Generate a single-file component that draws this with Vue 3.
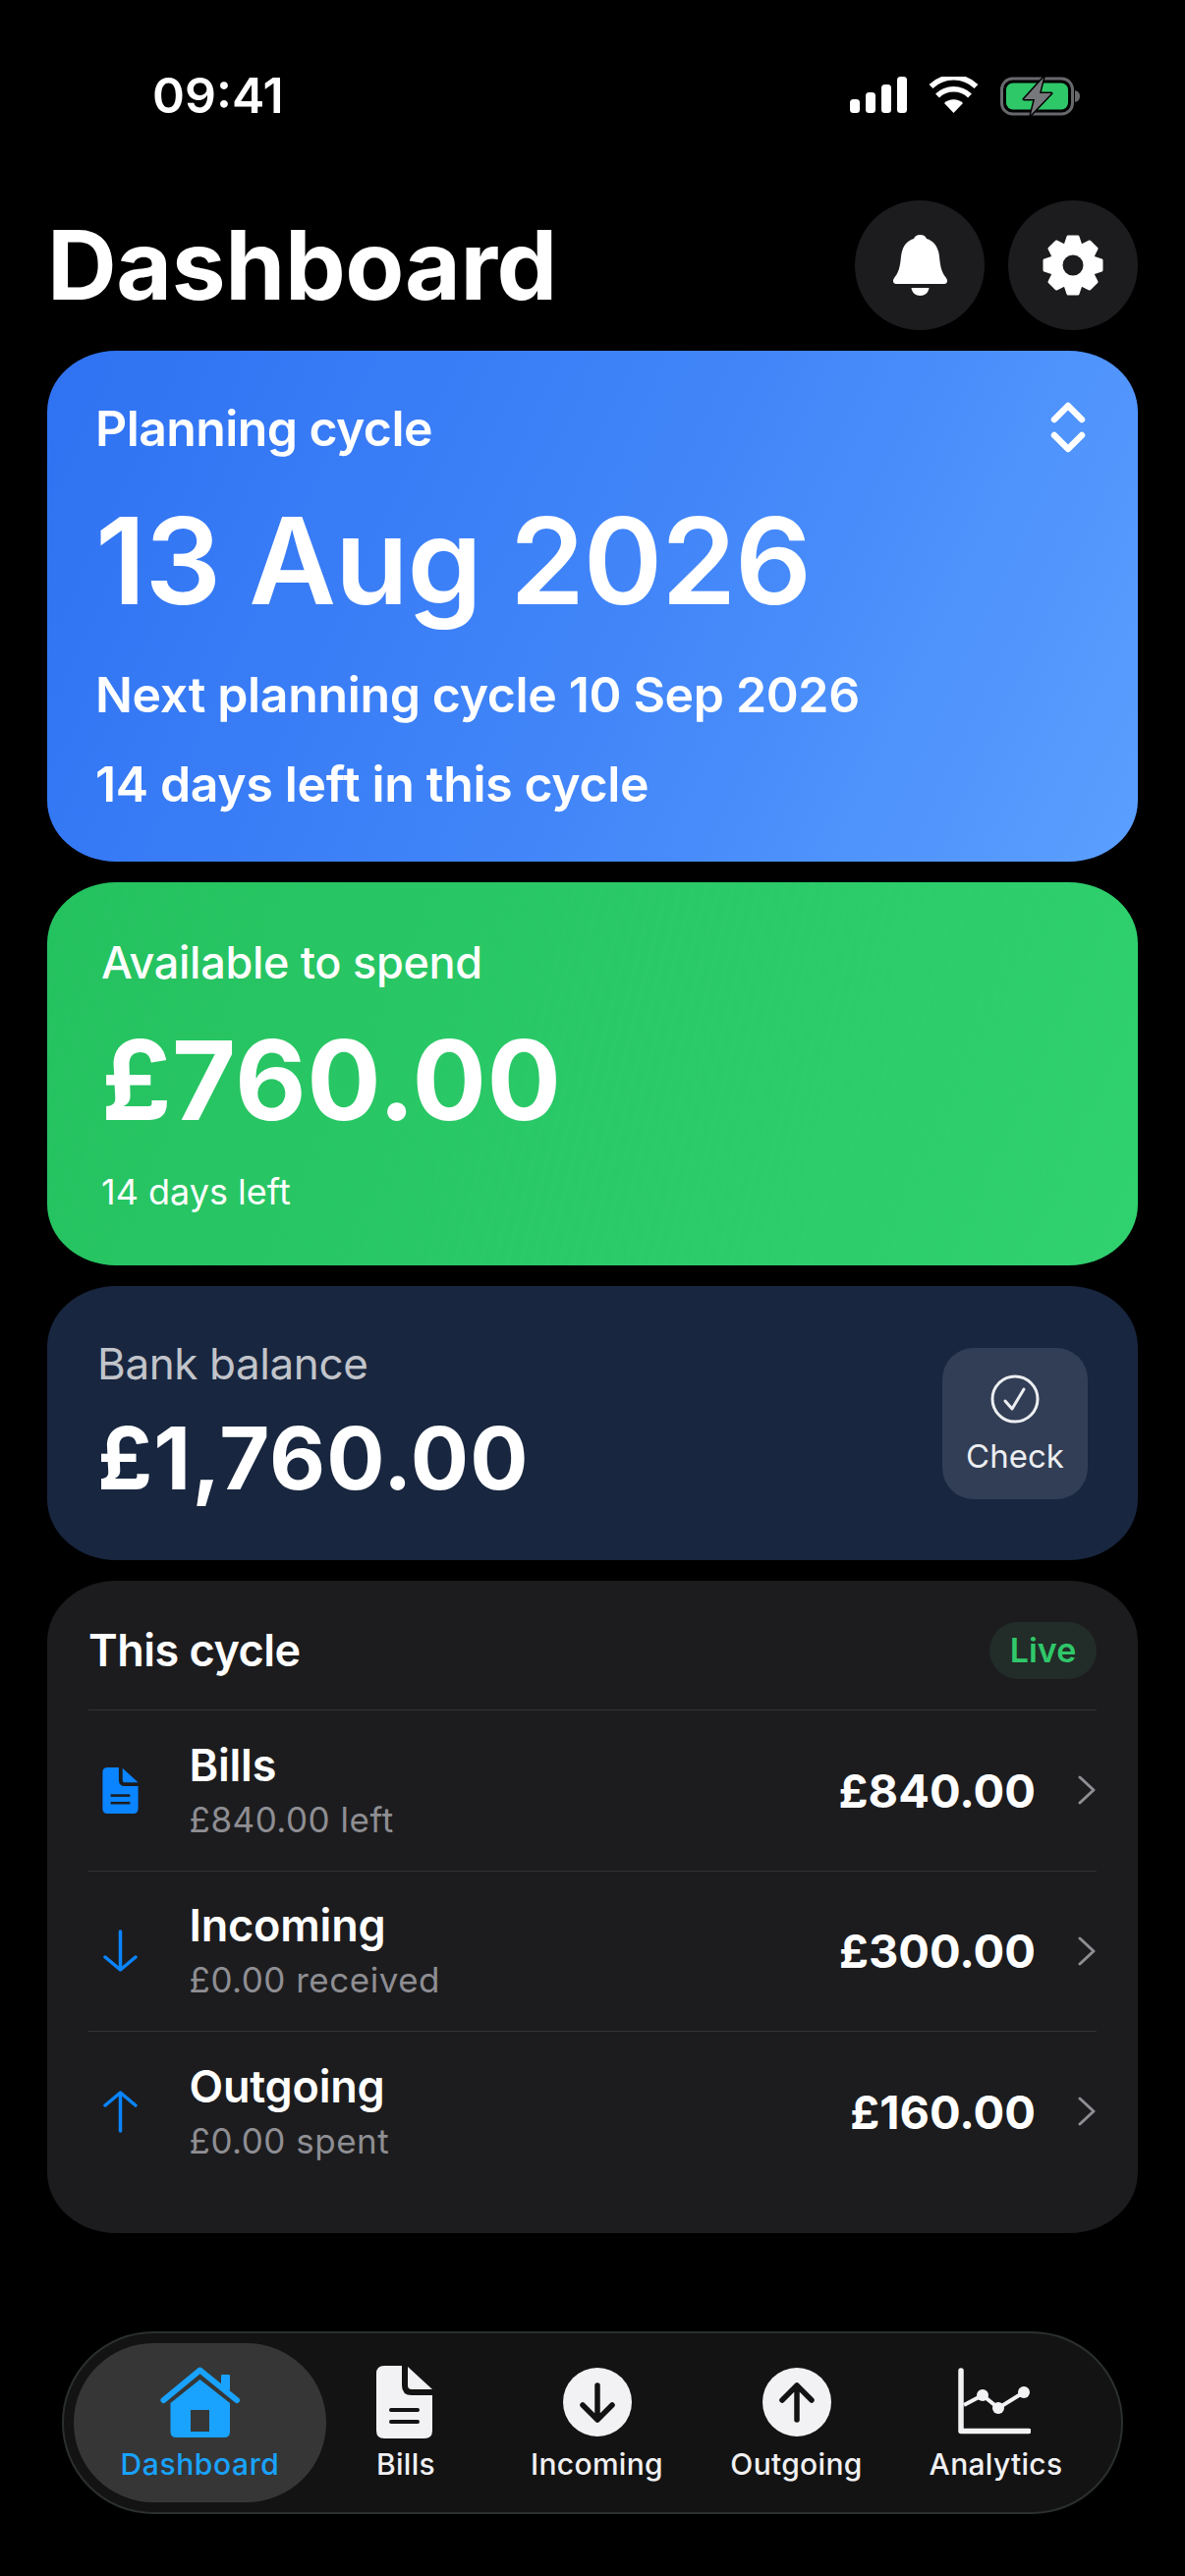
<template>
  <div class="page">
    <div class="status">
      <span class="time">09:41</span>
      <div class="status-icons">
        <svg class="signal" width="58" height="37" viewBox="0 0 58 37">
          <rect x="0" y="23" width="10" height="14" rx="3.5" />
          <rect x="16" y="16" width="10" height="21" rx="3.5" />
          <rect x="32" y="8" width="10" height="29" rx="3.5" />
          <rect x="48" y="0" width="10" height="37" rx="3.5" />
        </svg>
        <svg class="wifi" width="51" height="37" viewBox="0 0 51 37">
          <path d="M25.5 37 L16 27 A14 14 0 0 1 35 27 Z" fill="#fff" />
          <path d="M9 19.5 A23.5 23.5 0 0 1 42 19.5" fill="none" stroke="#fff" stroke-width="5.5" />
          <path d="M2.5 10 A33 33 0 0 1 48.5 10" fill="none" stroke="#fff" stroke-width="5.5" />
        </svg>
        <svg class="battery" width="82" height="40" viewBox="0 0 82 40">
          <rect x="1.5" y="2" width="72" height="36" rx="11" fill="none" stroke="#68696d" stroke-width="3" />
          <rect x="6" y="6.5" width="63" height="27" rx="7" fill="#2fc868" />
          <path d="M76 14 Q81 15 81 20 Q81 25 76 26 Z" fill="#68696d" />
          <path d="M44 1 L24 23 H35 L31 39 L52 17 H40 Z" fill="#77787c" stroke="#000" stroke-width="3" stroke-linejoin="round" paint-order="stroke" />
        </svg>
      </div>
    </div>

    <header class="top">
      <h1>Dashboard</h1>
      <div class="top-actions">
        <button class="round-btn">
          <svg width="55" height="62" viewBox="0 0 55 62" fill="#fff">
            <path d="M27.5 0 C31 0 33 1.5 34 4 C42 6.5 46 13 47 22 C48 34 50 39 54 44 C56 47 55 50 52 50 L3 50 C0 50 -1 47 1 44 C5 39 7 34 8 22 C9 13 13 6.5 21 4 C22 1.5 24 0 27.5 0 Z" />
            <path d="M18.5 54 L36.5 54 C36 59 32 62 27.5 62 C23 62 19 59 18.5 54 Z" />
          </svg>
        </button>
        <button class="round-btn">
          <svg width="62" height="62" viewBox="-31 -31 62 62">
            <circle r="16.5" fill="none" stroke="#fff" stroke-width="12" />
            <path
              v-for="deg in gearTeeth"
              :key="deg"
              d="M-8 -20 L-5 -29 H5 L8 -20 Z"
              fill="#fff"
              stroke="#fff"
              stroke-width="3"
              stroke-linejoin="round"
              :transform="`rotate(${deg})`"
            />
          </svg>
        </button>
      </div>
    </header>

    <main class="cards">
      <section class="card plan">
        <div class="plan-head">
          <span>Planning cycle</span>
          <svg width="36" height="52" viewBox="0 0 36 52" fill="none" stroke="#fff" stroke-width="6.5" stroke-linecap="round" stroke-linejoin="round">
            <path d="M4 18 L18 4 L32 18" />
            <path d="M4 34 L18 48 L32 34" />
          </svg>
        </div>
        <div class="plan-date">13 Aug 2026</div>
        <div class="plan-next">Next planning cycle 10 Sep 2026</div>
        <div class="plan-left">14 days left in this cycle</div>
      </section>

      <section class="card spend">
        <div class="spend-label">Available to spend</div>
        <div class="spend-amount">£760.00</div>
        <div class="spend-days">14 days left</div>
      </section>

      <section class="card bank">
        <div>
          <div class="bank-label">Bank balance</div>
          <div class="bank-amount">£1,760.00</div>
        </div>
        <button class="check-btn">
          <svg width="50" height="50" viewBox="0 0 50 50" fill="none" stroke="#eceef1" stroke-width="3" stroke-linecap="round" stroke-linejoin="round">
            <circle cx="25" cy="25" r="23" />
            <path d="M15 27 L22 35 L34 15" />
          </svg>
          <span>Check</span>
        </button>
      </section>

      <section class="card cycle">
        <div class="cycle-head">
          <span class="cycle-title">This cycle</span>
          <span class="live">Live</span>
        </div>
        <div v-for="row in rows" :key="row.title" class="row">
          <div class="row-icon">
            <svg v-if="row.icon === 'bill'" width="37" height="47" viewBox="0 0 57 74">
              <path d="M8 0 H26 V20 Q26 30 36 30 H57 V66 Q57 74 49 74 H8 Q0 74 0 66 V8 Q0 0 8 0 Z" fill="#0a84ff" />
              <path d="M32 1 L57 24 H36 Q32 24 32 20 Z" fill="#0a84ff" />
              <rect x="13" y="43" width="31" height="4" fill="#1c1c1e" />
              <rect x="13" y="55" width="31" height="4" fill="#1c1c1e" />
            </svg>
            <svg v-else width="35" height="44" viewBox="0 0 35 44" fill="none" stroke="#0a84ff" stroke-width="3.5" stroke-linecap="round" stroke-linejoin="round">
              <path v-if="row.icon === 'down'" d="M17.5 2 V41 M2 28 L17.5 41 L33 28" />
              <path v-else d="M17.5 42 V3 M2 16 L17.5 3 L33 16" />
            </svg>
          </div>
          <div class="row-text">
            <div class="row-title">{{ row.title }}</div>
            <div class="row-sub">{{ row.sub }}</div>
          </div>
          <div class="row-amount">{{ row.amount }}</div>
          <svg class="row-chev" width="18" height="30" viewBox="0 0 18 30" fill="none" stroke="#8e8e93" stroke-width="3" stroke-linecap="round" stroke-linejoin="round">
            <path d="M2 2 L16 15 L2 28" />
          </svg>
        </div>
      </section>
    </main>

    <nav class="tabbar">
      <div class="tab active">
        <svg width="82" height="72" viewBox="0 0 82 72">
          <rect x="62" y="8" width="9" height="16" rx="1" fill="#19a3ff" />
          <path d="M3.5 34 L40.5 3.5 L78 34" fill="none" stroke="#19a3ff" stroke-width="6" stroke-linecap="round" stroke-linejoin="round" />
          <path d="M40.5 13 L71 37 V66 Q71 72 65 72 H16.5 Q10.5 72 10.5 66 V37 Z" fill="#19a3ff" />
          <rect x="31" y="44" width="19" height="22" fill="#363636" />
        </svg>
        <span>Dashboard</span>
      </div>
      <div class="tab tab-bills">
        <svg width="57" height="74" viewBox="0 0 57 74">
          <path d="M8 0 H26 V20 Q26 30 36 30 H57 V66 Q57 74 49 74 H8 Q0 74 0 66 V8 Q0 0 8 0 Z" fill="#f2f2f4" />
          <path d="M32 1 L57 24 H36 Q32 24 32 20 Z" fill="#f2f2f4" />
          <rect x="13" y="43" width="31" height="4" rx="2" fill="#131313" />
          <rect x="13" y="55" width="31" height="4" rx="2" fill="#131313" />
        </svg>
        <span>Bills</span>
      </div>
      <div class="tab">
        <svg width="70" height="70" viewBox="0 0 70 70">
          <circle cx="35" cy="35" r="35" fill="#f2f2f4" />
          <path d="M35 18 V53 M20 38 L35 53 L50 38" fill="none" stroke="#131313" stroke-width="5.5" stroke-linecap="round" stroke-linejoin="round" />
        </svg>
        <span>Incoming</span>
      </div>
      <div class="tab">
        <svg width="70" height="70" viewBox="0 0 70 70">
          <circle cx="35" cy="35" r="35" fill="#f2f2f4" />
          <path d="M35 53 V18 M20 33 L35 18 L50 33" fill="none" stroke="#131313" stroke-width="5.5" stroke-linecap="round" stroke-linejoin="round" />
        </svg>
        <span>Outgoing</span>
      </div>
      <div class="tab">
        <svg class="chart" width="74" height="70" viewBox="0 -3 74 70">
          <path d="M3 0 V61.5 H72" fill="none" stroke="#f2f2f4" stroke-width="5.5" stroke-linecap="round" stroke-linejoin="round" />
          <path d="M6 35 L25 25 L41 38 L67 22" fill="none" stroke="#f2f2f4" stroke-width="4" stroke-linejoin="round" />
          <circle cx="25" cy="25" r="6" fill="#f2f2f4" />
          <circle cx="41" cy="38" r="6" fill="#f2f2f4" />
          <circle cx="67" cy="22" r="6" fill="#f2f2f4" />
        </svg>
        <span>Analytics</span>
      </div>
    </nav>
  </div>
</template>

<script setup>
const gearTeeth = [0, 45, 90, 135, 180, 225, 270, 315];

const rows = [
  { icon: "bill", title: "Bills", sub: "£840.00 left", amount: "£840.00" },
  { icon: "down", title: "Incoming", sub: "£0.00 received", amount: "£300.00" },
  { icon: "up", title: "Outgoing", sub: "£0.00 spent", amount: "£160.00" },
];
</script>

<style>
html,
body {
  background: #000;
}
</style>

<style scoped>
.page {
  width: 1206px;
  height: 2622px;
  background: #000;
  color: #fff;
  font-family: Inter, "Liberation Sans", sans-serif;
  display: flex;
  flex-direction: column;
  overflow: hidden;
}

.status {
  height: 204px;
  padding: 78px 106px 0 155px;
  box-sizing: border-box;
  display: flex;
  justify-content: space-between;
  align-items: flex-start;
}
.time {
  font-size: 50px;
  line-height: 39px;
  font-weight: 600;
}
.status-icons {
  display: flex;
  align-items: flex-start;
  gap: 22px;
}
.signal {
  fill: #fff;
}

.top {
  height: 132px;
  margin-bottom: 21px;
  padding: 0 48px;
  display: flex;
  justify-content: space-between;
  align-items: center;
}
h1 {
  margin: 0;
  font-size: 98px;
  line-height: 132px;
  font-weight: 700;
  letter-spacing: -0.4px;
}
.top-actions {
  display: flex;
  gap: 24px;
}
.round-btn {
  width: 132px;
  height: 132px;
  border: 0;
  padding: 0;
  border-radius: 50%;
  background: #1c1c1e;
  display: flex;
  align-items: center;
  justify-content: center;
}

.cards {
  padding: 0 48px;
  display: flex;
  flex-direction: column;
  gap: 21px;
}
.card {
  border-radius: 70px / 62px;
  box-sizing: border-box;
}

.plan {
  height: 520px;
  padding: 49px 49px 0;
  background: linear-gradient(115deg, #2f72f2 0%, #4286f9 55%, #5b9fff 100%);
}
.plan-head {
  display: flex;
  justify-content: space-between;
  align-items: center;
  height: 60px;
  font-size: 50px;
  font-weight: 600;
  letter-spacing: -0.6px;
}
.plan-head svg {
  margin-right: 4px;
  margin-top: -2px;
}
.plan-date {
  margin-top: 40px;
  font-size: 122px;
  line-height: 130px;
  font-weight: 600;
  letter-spacing: -1.2px;
}
.plan-next,
.plan-left {
  font-size: 50px;
  line-height: 60px;
  font-weight: 600;
  letter-spacing: -0.35px;
}
.plan-next {
  margin-top: 41px;
}
.plan-left {
  margin-top: 31px;
}

.spend {
  height: 390px;
  padding: 54px 55px 0;
  background:
    repeating-linear-gradient(104deg, rgba(255, 255, 255, 0.006) 0 5px, transparent 5px 13px),
    linear-gradient(115deg, #24c15f 0%, #30d16f 100%);
}
.spend-label {
  font-size: 45px;
  line-height: 56px;
  font-weight: 500;
  letter-spacing: -0.3px;
}
.spend-amount {
  margin-top: 31px;
  font-size: 112px;
  line-height: 120px;
  font-weight: 700;
  letter-spacing: 0.5px;
}
.spend-days {
  margin-top: 32px;
  font-size: 36px;
  line-height: 44px;
  font-weight: 400;
}

.bank {
  height: 279px;
  padding: 0 51px;
  background: #18263f;
  display: flex;
  justify-content: space-between;
  align-items: center;
}
.bank-label {
  font-size: 44px;
  line-height: 50px;
  color: #c1c4ca;
  letter-spacing: -0.4px;
}
.bank-amount {
  margin-top: 21px;
  font-size: 88px;
  line-height: 100px;
  font-weight: 700;
  letter-spacing: 1px;
}
.check-btn {
  width: 148px;
  height: 154px;
  border: 0;
  padding: 27px 0 0;
  box-sizing: border-box;
  border-radius: 32px;
  background: #323e55;
  color: #eceef1;
  font: inherit;
  font-size: 33px;
  display: flex;
  flex-direction: column;
  align-items: center;
  gap: 13px;
}

.cycle {
  height: 664px;
  padding: 42px 42px 0;
  background: #1c1c1e;
}
.cycle-head {
  height: 89px;
  display: flex;
  justify-content: space-between;
  align-items: flex-start;
}
.cycle-title {
  font-size: 45px;
  line-height: 58px;
  font-weight: 600;
  letter-spacing: -0.5px;
}
.live {
  width: 109px;
  height: 58px;
  border-radius: 29px;
  background: #222c28;
  color: #30c76a;
  font-size: 34px;
  line-height: 58px;
  font-weight: 600;
  text-align: center;
}
.row {
  height: 163.5px;
  box-sizing: border-box;
  border-top: 1px solid #333336;
  display: flex;
  align-items: center;
}
.row-icon {
  width: 65px;
  margin-right: 37.5px;
  display: flex;
  justify-content: center;
}
.row-text {
  flex: 1;
  padding-top: 2px;
}
.row-title {
  font-size: 45px;
  line-height: 50px;
  font-weight: 600;
  letter-spacing: -0.2px;
}
.row-sub {
  margin-top: 7px;
  font-size: 35px;
  line-height: 46px;
  color: #8e8e93;
  letter-spacing: 0.5px;
}
.row-amount {
  font-size: 47px;
  font-weight: 700;
}
.row-chev {
  margin-left: 43px;
  margin-right: 1px;
}

.tabbar {
  margin: auto 63px 63px;
  height: 186px;
  box-sizing: border-box;
  padding: 10px;
  border: 2px solid #2b302e;
  border-radius: 93px;
  background: #131313;
  display: flex;
  align-items: stretch;
}
.tab {
  width: 203px;
  box-sizing: border-box;
  padding-top: 23px;
  display: flex;
  flex-direction: column;
  align-items: center;
  justify-content: flex-start;
  color: #f0f0f2;
  font-size: 30px;
  font-weight: 500;
  letter-spacing: 0.3px;
}
.tab svg {
  height: 74px;
}
.tab .chart {
  margin-left: -3px;
}
.tab span {
  margin-top: 7px;
  line-height: 38px;
}
.tab.active {
  width: 257px;
  border-radius: 81px;
  background: #363636;
  color: #19a3ff;
  letter-spacing: 0.6px;
}
.tab-bills {
  width: 162px;
  margin-right: 12px;
}
.tab-bills svg {
  margin-left: -3px;
}
</style>
